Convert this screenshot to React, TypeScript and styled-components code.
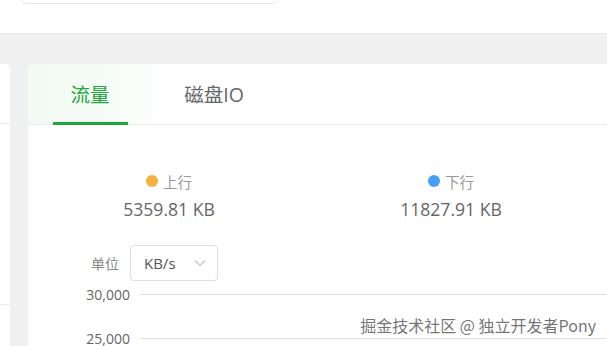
import React, { FC } from 'react';
import styled, { createGlobalStyle } from 'styled-components';

const GlobalStyle = createGlobalStyle`
  html, body {
    margin: 0;
    padding: 0;
    background: #f0f0f0;
    overflow: hidden;
  }
  body {
    font-family: 'Open Sans', 'Noto Sans', 'Noto Sans CJK SC', sans-serif;
  }
`;

const Page = styled.div`
  width: 607px;
  height: 346px;
  position: relative;
  overflow: hidden;
  background: #f0f0f0;
`;

const TopBar = styled.div`
  height: 33px;
  background: #fff;
  border-bottom: 1px solid #e6e6e6;
  padding-left: 20px;
  overflow: hidden;
`;

const SearchBox = styled.div`
  width: 256px;
  height: 32px;
  margin-top: -30px;
  border: 1px solid #e8e8e8;
  border-radius: 5px;
  background: #fff;
`;

const Content = styled.div`
  display: flex;
  gap: 18px;
  padding-top: 30px;
  margin-right: -40px;
`;

const SideCard = styled.div`
  width: 10px;
  height: 300px;
  flex-shrink: 0;
  background: #fff;
  border-radius: 0 5px 0 0;
`;

const SideHead = styled.div`
  height: 59px;
  border-bottom: 1px solid #eaeaea;
`;

const SideBody = styled.div`
  height: 180px;
  border-bottom: 1px solid #eaeaea;
`;

const MainCard = styled.div`
  flex: 1;
  height: 300px;
  background: #fff;
  border-radius: 6px 0 0 0;
`;

const Tabs = styled.div`
  display: flex;
  height: 60px;
  border-bottom: 1px solid #ececec;
`;

const Tab = styled.div<{ $active?: boolean }>`
  position: relative;
  width: 124px;
  display: flex;
  align-items: center;
  justify-content: center;
  font-size: 19.5px;
  color: ${(p) => (p.$active ? '#20a53a' : '#666')};
  background: ${(p) =>
    p.$active ? 'linear-gradient(90deg, #f2faf3 0%, #f6fcf7 70%, #fbfefb 100%)' : 'transparent'};
  border-radius: ${(p) => (p.$active ? '6px 0 0 0' : '0')};
  padding-bottom: 2px;

  &::after {
    content: '';
    display: ${(p) => (p.$active ? 'block' : 'none')};
    position: absolute;
    left: 25px;
    right: 24px;
    bottom: -1px;
    height: 3px;
    background: #20a53a;
  }
`;

const Body = styled.div`
  padding-top: 46px;
`;

const Stats = styled.div`
  display: grid;
  grid-template-columns: repeat(2, 282px);
`;

const Stat = styled.div`
  display: flex;
  flex-direction: column;
  align-items: center;
  gap: 6px;
`;

const StatLabel = styled.div`
  display: flex;
  align-items: center;
  gap: 5px;
  height: 20px;
  font-size: 14.5px;
  color: #999;
`;

const Dot = styled.span<{ $color: string }>`
  width: 12px;
  height: 12px;
  border-radius: 50%;
  background: ${(p) => p.$color};
`;

const StatValue = styled.div`
  height: 24px;
  line-height: 24px;
  font-size: 17.6px;
  color: #666;
`;

const UnitRow = styled.div`
  display: flex;
  align-items: center;
  gap: 11px;
  margin-top: 24px;
  padding-left: 63px;
`;

const UnitLabel = styled.span`
  font-size: 14px;
  color: #888;
`;

const Select = styled.div`
  box-sizing: border-box;
  width: 88px;
  height: 36px;
  border: 1px solid #dcdfe6;
  border-radius: 4px;
  display: flex;
  align-items: center;
  justify-content: space-between;
  padding: 0 11px 0 13px;
  font-size: 15px;
  color: #555;
`;

const Chart = styled.div`
  display: flex;
  flex-direction: column;
  gap: 22px;
  margin-top: 2px;
`;

const GridRow = styled.div`
  display: flex;
  align-items: center;
  gap: 10px;
  height: 22px;
`;

const AxisLabel = styled.span`
  width: 102px;
  text-align: right;
  font-size: 14px;
  color: #666;
`;

const GridLine = styled.div`
  flex: 1;
  border-top: 1px solid #e0e0e0;
`;

const Watermark = styled.div`
  position: absolute;
  right: 11px;
  top: 313px;
  font-size: 16px;
  color: rgba(90, 90, 90, 0.85);
  text-shadow: 0 0 2px #fff, 0 0 2px #fff;
  font-family: 'Noto Sans CJK SC', 'Noto Sans', sans-serif;
`;

const Chevron: FC = () => (
  <svg width="12" height="8" viewBox="0 0 12 8" fill="none">
    <path d="M1 1.5 L6 6.5 L11 1.5" stroke="#c0c4cc" strokeWidth="1.2" />
  </svg>
);

const stats = [
  { label: '上行', value: '5359.81 KB', color: '#f5b042' },
  { label: '下行', value: '11827.91 KB', color: '#4a9ff5' },
];

const App: FC = () => (
  <Page>
    <GlobalStyle />
    <TopBar>
      <SearchBox />
    </TopBar>
    <Content>
      <SideCard>
        <SideHead />
        <SideBody />
      </SideCard>
      <MainCard>
        <Tabs>
          <Tab $active>流量</Tab>
          <Tab>磁盘IO</Tab>
        </Tabs>
        <Body>
          <Stats>
            {stats.map((s) => (
              <Stat key={s.label}>
                <StatLabel>
                  <Dot $color={s.color} />
                  {s.label}
                </StatLabel>
                <StatValue>{s.value}</StatValue>
              </Stat>
            ))}
          </Stats>
          <UnitRow>
            <UnitLabel>单位</UnitLabel>
            <Select>
              KB/s
              <Chevron />
            </Select>
          </UnitRow>
          <Chart>
            <GridRow>
              <AxisLabel>30,000</AxisLabel>
              <GridLine />
            </GridRow>
            <GridRow>
              <AxisLabel>25,000</AxisLabel>
              <GridLine />
            </GridRow>
          </Chart>
        </Body>
      </MainCard>
    </Content>
    <Watermark>掘金技术社区 @ 独立开发者Pony</Watermark>
  </Page>
);

export default App;
